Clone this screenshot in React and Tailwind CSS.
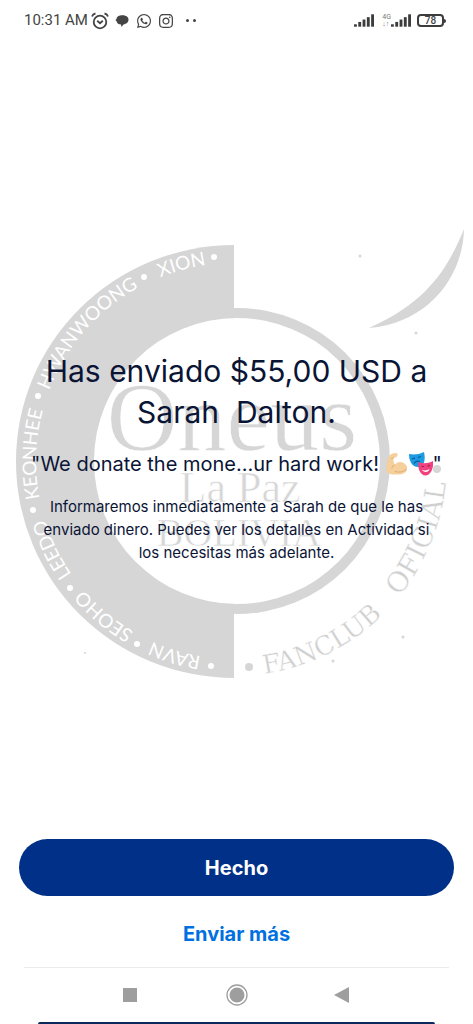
import React from 'react';
import { FaWhatsapp, FaInstagram } from 'react-icons/fa';

// angle is measured clockwise from the bottom of the seal
const members = [
  { name: 'RAVN', angle: 17 },
  { name: 'SEOHO', angle: 40 },
  { name: 'LEEDO', angle: 64 },
  { name: 'KEONHEE', angle: 92 },
  { name: 'HWANWOONG', angle: 131 },
  { name: 'XION', angle: 165 },
];

const sealDots = [
  [211, 667], [137, 645], [70, 589], [33, 511], [38, 397], [144, 278], [214, 258],
];

function Watermark() {
  return (
    <svg
      viewBox="0 220 473 476"
      className="absolute left-0 top-1/2 w-full -translate-y-1/2"
      fill="#d6d6d6"
      aria-hidden="true"
    >
      <defs>
        <path id="seal-left" d="M234 660 A198 198 0 0 1 234 264" />
        <path id="seal-right" d="M234 677 A213 215 0 0 0 447 462" />
      </defs>
      <path d="M234 246 A218 216.500 0 0 0 16 462.500 A218 216.500 0 0 0 234 679 Z" />
      <circle cx="237" cy="462" r="153" />
      <circle cx="237" cy="462" r="143" fill="#fff" />
      <path d="M464 230 C463 278 428 324 369 329 C418 307 444 280 464 230 Z" />

      <g fill="#fff" fontFamily="Lato, sans-serif" fontSize="19">
        {members.map((m) => (
          <text key={m.name} textAnchor="middle">
            <textPath href="#seal-left" startOffset={`${(m.angle / 180) * 100}%`}>
              {m.name}
            </textPath>
          </text>
        ))}
        {sealDots.map(([x, y]) => (
          <circle key={y} cx={x} cy={y} r="3" />
        ))}
      </g>

      <g
        fill="#cfcfcf"
        fontFamily="'DejaVu Serif', serif"
        textAnchor="middle"
        stroke="#fff"
        strokeWidth="0.4"
      >
        <text fontSize="26">
          <textPath href="#seal-right" startOffset="29%">FANCLUB</textPath>
        </text>
        <text fontSize="28">
          <textPath href="#seal-right" startOffset="75%">OFICIAL</textPath>
        </text>
      </g>
      <circle cx="249" cy="668" r="4" />
      <circle cx="437" cy="470" r="4" />

      <g fontFamily="'Liberation Serif', serif" textAnchor="middle" stroke="#fff" strokeWidth="0.6">
        <text x="232" y="451" fontSize="98">Oneus</text>
        <text x="240" y="503" fontSize="44">La Paz</text>
        <text x="239" y="547" fontSize="40">BOLIVIA</text>
      </g>

      <circle cx="360" cy="257" r="1.500" />
      <circle cx="416" cy="334" r="1.500" />
      <circle cx="85" cy="654" r="1" />
      <circle cx="403" cy="638" r="1.500" />
      <circle cx="333" cy="662" r="1.500" />
    </svg>
  );
}

function ArmEmoji() {
  return (
    <svg viewBox="0 0 24 24" className="inline-block size-6 align-[-5px]" role="img" aria-label="Bíceps">
      <path
        d="M5 3 C7 1 12 0 12.500 2 C13 4.500 11 5.500 8.500 6 C8 8 9 10 9.500 13 C12 9 18 9 21 13 C24 18 21 22 14 22.500 C8 23 2 22 1.500 19 C1 14 2 7 5 3 Z"
        fill="#f5cf9c"
      />
      <path
        d="M8.500 6 L6.500 6.500 M9.500 13 C8 13.500 7 14.500 7 16 M21 17.500 C18 20.500 13 20.500 10 19.500"
        fill="none"
        stroke="#dfae72"
        strokeLinecap="round"
      />
    </svg>
  );
}

function MasksEmoji() {
  return (
    <svg viewBox="0 0 24 24" className="inline-block size-6 align-[-5px]" role="img" aria-label="Máscaras">
      <path d="M0 2 C5 3 10 2.500 15 0 C16.500 7 16 13 10 15 C3 15.500 0 9 0 2 Z" fill="#1e9be0" />
      <path
        d="M3 7 L6 6.200 M9 5.500 L12 4.500 M5 11.500 C6 9.500 9 8.500 11 9.500"
        fill="none"
        stroke="#0b5c9c"
        strokeWidth="1.200"
      />
      <path d="M9.500 10 C14 12 19 11.500 24 9 C25 15 22 23.500 16.500 23.500 C11 23 8.500 16 9.500 10 Z" fill="#f0427f" />
      <path d="M12.500 14.500 L15 14.500 M18.500 14.200 L21 13.200" stroke="#a31d55" strokeWidth="1.200" />
      <path d="M13 17.800 C15 18.800 18.500 18.500 20.500 17 C20 20.500 14.500 21 13 17.800 Z" fill="#fff" />
    </svg>
  );
}

function Signal() {
  return (
    <svg viewBox="0 0 21 13" className="h-[13px] w-5" fill="#3c3c3c">
      <rect x="0" y="10.500" width="3" height="2.500" />
      <rect x="4.500" y="8" width="3" height="5" />
      <rect x="9" y="5.500" width="3" height="7.500" />
      <rect x="13.500" y="3" width="3" height="10" />
      <rect x="18" y="0" width="3" height="13" />
    </svg>
  );
}

function StatusBar() {
  return (
    <header className="flex h-[41px] items-center justify-between pl-6 pr-[27px] font-[Roboto,sans-serif] text-[#444]">
      <div className="flex items-center">
        <span className="text-[15px]">10:31 AM</span>
        <svg viewBox="0 0 18 18" className="ml-[3px] size-[18px]" fill="none" stroke="#444" strokeWidth="1.800">
          <circle cx="9" cy="10" r="6.300" />
          <path d="M6.200 8.800 L9 11.200 L11.800 8.800 M1 4.500 C1.500 3 3 1.800 4.500 1.500 M17 4.500 C16.500 3 15 1.800 13.500 1.500" />
        </svg>
        <svg viewBox="0 0 14 14" className="ml-[6px] size-[14px]" fill="#444">
          <path d="M5 1.500 C9 .5 13.500 2 13.500 5.500 C13.500 9 10.500 10 8.500 10.500 L6.500 13 L6 10.500 C3.500 10.500 2 9.500 2 8 L.5 6 L1.500 5 C1.500 3 3 2 5 1.500 Z" />
        </svg>
        <FaWhatsapp className="ml-[7px] size-4" />
        <FaInstagram className="ml-[6px] size-4" />
        <span className="ml-3 flex gap-1">
          <i className="size-[3px] rounded-full bg-[#444]" />
          <i className="size-[3px] rounded-full bg-[#444]" />
        </span>
      </div>
      <div className="flex items-center">
        <Signal />
        <span className="ml-2 flex flex-col text-[7px] leading-[7px] text-[#777]">
          <span>4G</span>
          <span>↓↑</span>
        </span>
        <Signal />
        <span className="ml-[6px] flex h-[13px] w-[27px] items-center justify-center rounded border-2 border-[#3c3c3c] text-[10px] font-medium leading-none">
          78
        </span>
        <i className="h-1 w-[2px] rounded-r bg-[#3c3c3c]" />
      </div>
    </header>
  );
}

function NavBar() {
  return (
    <nav className="mx-6 grid h-[55px] grid-cols-[1fr_auto_1fr] items-center border-t border-[#ececec]">
      <button aria-label="Recientes" className="mr-[89px] justify-self-end">
        <span className="block size-[14px] bg-[#9e9e9e]" />
      </button>
      <button aria-label="Inicio">
        <svg viewBox="0 0 22 22" className="size-[22px]">
          <circle cx="11" cy="11" r="10" fill="none" stroke="#9e9e9e" strokeWidth="1.300" />
          <circle cx="11" cy="11" r="7.500" fill="#9e9e9e" />
        </svg>
      </button>
      <button aria-label="Atrás" className="ml-[86px] justify-self-start">
        <svg viewBox="0 0 15 16" className="h-4 w-[15px]" fill="#9e9e9e">
          <path d="M15 0 V16 L0 8 Z" />
        </svg>
      </button>
    </nav>
  );
}

export default function App() {
  return (
    <div className="flex min-h-screen flex-col bg-white font-[Inter,sans-serif] text-[#0a1435]">
      <StatusBar />

      <main className="flex flex-1 flex-col justify-center pt-[34px]">
        <div className="relative">
          <Watermark />
          <div className="relative px-6 text-center">
            <h1 className="whitespace-pre-wrap text-[30px] leading-[41px]">
              {'Has enviado $55,00 USD a\nSarah  Dalton.'}
            </h1>
            <p className="mt-4 whitespace-nowrap text-xl leading-[30px]">
              "We donate the mone…ur hard work! <ArmEmoji />
              <MasksEmoji />"
            </p>
            <p className="mt-4 px-3 text-[15px] leading-[23px]">
              Informaremos inmediatamente a Sarah de que le has enviado dinero. Puedes ver los detalles en
              Actividad si los necesitas más adelante.
            </p>
          </div>
        </div>
      </main>

      <footer>
        <div className="flex flex-col px-[19px] text-xl font-bold">
          <button className="h-[57px] rounded-full bg-[#003087] text-white">Hecho</button>
          <button className="mb-[18px] mt-[22px] h-[31px] self-center text-[#0070e0]">Enviar más</button>
        </div>
        <NavBar />
        <div className="mx-[38px] h-[2px] rounded-t bg-[#0b2a5c]" />
      </footer>
    </div>
  );
}
